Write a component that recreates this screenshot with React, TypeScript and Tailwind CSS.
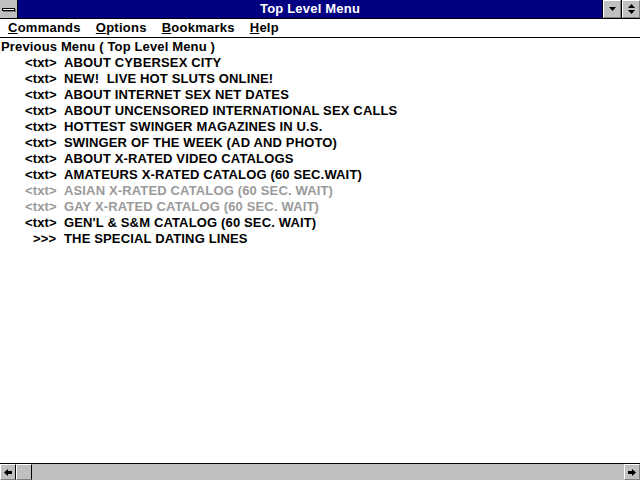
const items: { tag: string; text: string; faded?: boolean }[] = [
  { tag: '<txt>', text: 'ABOUT CYBERSEX CITY' },
  { tag: '<txt>', text: 'NEW!  LIVE HOT SLUTS ONLINE!' },
  { tag: '<txt>', text: 'ABOUT INTERNET SEX NET DATES' },
  { tag: '<txt>', text: 'ABOUT UNCENSORED INTERNATIONAL SEX CALLS' },
  { tag: '<txt>', text: 'HOTTEST SWINGER MAGAZINES IN U.S.' },
  { tag: '<txt>', text: 'SWINGER OF THE WEEK (AD AND PHOTO)' },
  { tag: '<txt>', text: 'ABOUT X-RATED VIDEO CATALOGS' },
  { tag: '<txt>', text: 'AMATEURS X-RATED CATALOG (60 SEC.WAIT)' },
  { tag: '<txt>', text: 'ASIAN X-RATED CATALOG (60 SEC. WAIT)', faded: true },
  { tag: '<txt>', text: 'GAY X-RATED CATALOG (60 SEC. WAIT)', faded: true },
  { tag: '<txt>', text: "GEN'L & S&M CATALOG (60 SEC. WAIT)" },
  { tag: '>>>', text: 'THE SPECIAL DATING LINES' },
];

function Bevel({ children, className = '' }: { children?: React.ReactNode; className?: string }) {
  return (
    <div className={`flex items-center justify-center bg-[#c0c0c0] border-t border-l border-t-white border-l-white border-r border-b border-r-[#808080] border-b-[#808080] ${className}`}>
      {children}
    </div>
  );
}

export default function App() {
  return (
    <div className="w-[640px] h-[480px] flex flex-col bg-white overflow-hidden" style={{ fontFamily: '"Liberation Sans", Arial, sans-serif' }}>
      {/* title bar */}
      <div className="h-[19px] flex bg-[#000080] border-b border-black">
        <div className="w-[18px] h-[18px] bg-[#c0c0c0] border-r border-black flex items-center justify-center">
          <div className="w-[13px] h-[3px] bg-white border border-black shadow-[1px_1px_0_#808080]" />
        </div>
        <div className="flex-1 text-center text-white font-bold text-[13px] leading-[18px] tracking-[0.2px]">Top Level Menu</div>
        <div className="flex border-l border-black">
          <Bevel className="w-[18px] h-[18px] border-r-[#404040]">
            <svg width="7" height="4" viewBox="0 0 7 4"><path d="M0 0h7L3.5 4z" fill="black" /></svg>
          </Bevel>
          <div className="w-px bg-black" />
          <Bevel className="w-[18px] h-[18px]">
            <svg width="7" height="10" viewBox="0 0 7 10"><path d="M3.5 0L7 4H0zM0 6h7L3.5 10z" fill="black" /></svg>
          </Bevel>
        </div>
      </div>
      {/* menu bar */}
      <div className="h-[19px] flex items-center border-b border-black text-[13px] font-bold text-black pl-[8px] gap-[15px] tracking-[0.25px]">
        <span><u>C</u>ommands</span>
        <span><u>O</u>ptions</span>
        <span><u>B</u>ookmarks</span>
        <span><u>H</u>elp</span>
      </div>
      {/* content */}
      <div className="flex-1 pt-[1px] text-[13px] font-bold leading-[16px] text-black tracking-[0.15px]">
        <div className="pl-[1px]">Previous Menu ( Top Level Menu )</div>
        {items.map((it) => (
          <div key={it.text} className={`flex ${it.faded ? 'text-[#9a9a9a]' : ''}`}>
            <span className={`w-[64px] shrink-0 ${it.tag === '>>>' ? 'pl-[33px]' : 'pl-[25px]'}`}>{it.tag}</span>
            <span className="whitespace-pre">{it.text}</span>
          </div>
        ))}
      </div>
      {/* horizontal scrollbar */}
      <div className="h-[17px] flex border-t border-black bg-[#c0c0c0]">
        <Bevel className="w-[16px] h-[16px] border-r-black">
          <svg width="8" height="7" viewBox="0 0 8 7"><path d="M0 3.5L4 0v2h4v3H4v2z" fill="black" /></svg>
        </Bevel>
        <Bevel className="w-[16px] h-[16px] border-r-black" />
        <div className="flex-1" />
        <Bevel className="w-[16px] h-[16px] border-l-black">
          <svg width="8" height="7" viewBox="0 0 8 7"><path d="M8 3.5L4 0v2H0v3h4v2z" fill="black" /></svg>
        </Bevel>
      </div>
    </div>
  );
}
